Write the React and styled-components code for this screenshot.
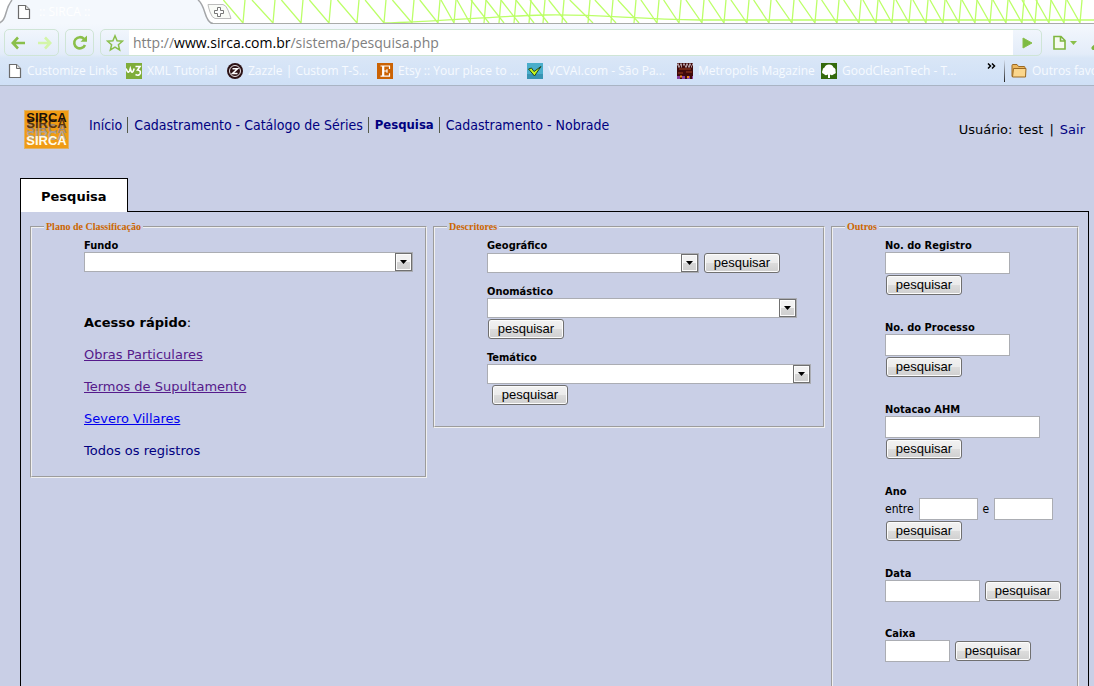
import React from "react";
import styled, { createGlobalStyle } from "styled-components";

const GlobalStyle = createGlobalStyle`
  * {
    box-sizing: border-box;
  }

  body {
    margin: 0;
    background-color: #c9cfe6;
    font-family: "DejaVu Sans", Verdana, sans-serif;
    font-size: 13px;
    line-height: 16px;
    color: #000;
  }

  button,
  input,
  select {
    margin: 0;
    font-family: inherit;
  }
`;

const bookmarks = [
  { name: "Customize Links", icon: "page", width: 118 },
  { name: "XML Tutorial", icon: "w3", width: 101 },
  { name: "Zazzle | Custom T-S...", icon: "zazzle", width: 150 },
  { name: "Etsy :: Your place to ...", icon: "etsy", width: 150 },
  { name: "VCVAI.com - São Pa...", icon: "check", width: 150 },
  { name: "Metropolis Magazine", icon: "metropolis", width: 144 },
  { name: "GoodCleanTech - T...", icon: "tree", width: 140 },
];

// x of every node where the mesh lines meet the bottom of the strip
const meshNodes = [
  243, 273, 301, 329, 357, 384, 412, 438, 454, 470, 484, 499, 514, 529, 543,
  562, 588, 611, 634, 657, 679, 702, 724, 747, 769, 792, 815, 837, 859, 876,
  892, 909, 926, 943, 959, 975, 990, 1006, 1022, 1035, 1049, 1064, 1080,
];

function Mesh() {
  return (
    <MeshSvg viewBox="0 0 1094 24" preserveAspectRatio="xMinYMin slice">
      <g fill="none" stroke="#bcff68" strokeWidth="1.300">
        {meshNodes.map((x, i) => {
          const step = i ? x - meshNodes[i - 1] : 28;
          // in the middle the diagonals cross above the bottom edge
          const over = x > 480 && x < 640 ? 5 : 0;
          return (
            <path
              key={x}
              d={`M${x - Math.max(13, step * 0.7)} 0L${x + over} 23M${x} 23L${x + 2} 0`}
            />
          );
        })}
        <path d="M383 23C440 22 490 16 545 15S630 19 700 20H1094" />
      </g>
    </MeshSvg>
  );
}

function PageIcon() {
  return (
    <svg width="14" height="16" viewBox="0 0 14 16">
      <path
        d="M1.500 1.500h7l4 4v9h-11z"
        fill="#fff"
        stroke="#6b6b6b"
        strokeWidth="1.200"
      />
      <path d="M8.500 1.500v4h4" fill="#ddd" stroke="#6b6b6b" />
    </svg>
  );
}

function BookmarkIcon({ name }) {
  switch (name) {
    case "w3":
      return (
        <svg width="16" height="16">
          <rect width="16" height="16" fill="#7fad3a" />
          <path
            d="M0 5.500l1.500 3q1 1.500 2-.5l.8-2.500.9 3q1 1.500 2-.3l1-2.700"
            fill="none"
            stroke="#fff"
            strokeWidth="1.600"
          />
          <path
            d="M9.500 3.500h4.500l-2.500 3.500q3.500.3 2.800 3.300-1.500 3-4.800 1.200"
            fill="none"
            stroke="#fff"
            strokeWidth="1.600"
          />
        </svg>
      );
    case "zazzle":
      return (
        <svg width="16" height="16">
          <circle cx="8" cy="8" r="8" fill="#2c1215" />
          <circle cx="8" cy="8" r="5.500" fill="none" stroke="#e8e2e4" />
          <path
            d="M5.500 5.800h5l-5 4.600h5"
            fill="none"
            stroke="#fff"
            strokeWidth="1.500"
          />
        </svg>
      );
    case "etsy":
      return (
        <svg width="16" height="16">
          <rect width="16" height="16" fill="#cb6304" />
          <path
            d="M3.500 3h9v3M3.500 13.200h9v-3M5.800 3v10M6 8h4M10 6.200v3.600"
            fill="none"
            stroke="#fff"
            strokeWidth="1.200"
          />
          <path d="M6.300 3v10" stroke="#fff" strokeWidth="2" />
        </svg>
      );
    case "check":
      return (
        <svg width="16" height="16">
          <rect width="16" height="16" fill="#4aaecb" />
          <rect y="11" width="16" height="5" fill="#3894b3" />
          <path
            d="M1.500 6l3-1 2.500 3.500 7-5-6.500 9.500z"
            fill="#c6f61c"
            stroke="#1f4426"
            strokeWidth="1"
          />
        </svg>
      );
    case "metropolis":
      return (
        <svg width="16" height="16">
          <rect width="16" height="16" fill="#400a0a" />
          <path
            d="M0 1.500h16M1 3.500h4M8 3.500h7"
            stroke="#b09aa0"
            strokeWidth="2"
            strokeDasharray="2 1"
          />
          <path d="M2 6h12M1 10h5M9 9h6" stroke="#6f2515" strokeWidth="2" />
          <path
            d="M0 14.500h16"
            stroke="#8a3fa0"
            strokeWidth="3"
            strokeDasharray="3 2"
          />
          <path d="M3 13.500h2M10 14h2" stroke="#f08a1c" strokeWidth="2" />
        </svg>
      );
    case "tree":
      return (
        <svg width="16" height="16">
          <rect width="16" height="16" fill="#346a0c" />
          <path
            d="M7 15v-3.500q-3 1.500-4-.5-3-1-1.500-3.500 0-2.500 2-3 1-3 4.500-3t4.500 3q2.500 1 2 3.500 1 2.500-1.500 3-1.500 2-4 .5V15z"
            fill="#fff"
          />
        </svg>
      );
    case "folder":
      return (
        <svg width="16" height="16">
          <path
            d="M1 13.500v-11q0-1 1-1h4l1.500 2H13q1 0 1 1v9z"
            fill="#ecb65c"
            stroke="#9d6a22"
          />
          <path
            d="M1.500 14l1-8.500H15l-.5 8.500z"
            fill="#fbd68c"
            stroke="#9d6a22"
          />
        </svg>
      );
    default:
      return <PageIcon />;
  }
}

function BrowserChrome() {
  return (
    <Chrome>
      <TabStrip>
        <Mesh />
        <TabShape width="236" height="24" viewBox="0 0 236 24">
          <path
            d="M0 23.500Q4 22 6 14T13 0H198Q202 4 205 14T213 24H0z"
            fill="#f4f8fd"
          />
          <path
            d="M0 22.500Q4 21 6 13T12 0M198 0Q202 3 205 13T213 23.500"
            fill="none"
            stroke="#a3a5a8"
            strokeWidth="1.500"
          />
          <path
            d="M208 4.500H223Q226 5 228 10T231 18.500H215Q212 18 210 12T208 4.500z"
            fill="#f9fbf7"
            stroke="#bcbcbc"
          />
          <path
            d="M217.500 7.500h3v3h3v3h-3v3h-3v-3h-3v-3h3z"
            fill="#fff"
            stroke="#777"
          />
        </TabShape>
        <TabTitle>
          <PageIcon />
          :: SIRCA ::
        </TabTitle>
      </TabStrip>

      <Toolbar>
        <NavButtons>
          <ToolButton aria-label="Voltar" $color="#8abf4a">
            <svg width="14" height="14">
              <path d="M14 7H2M7 1.500L1.800 7 7 12.500" />
            </svg>
          </ToolButton>
          <ToolButton aria-label="Avançar" $color="#d3f5a8">
            <svg width="14" height="14">
              <path d="M0 7h12M7 1.500L12.200 7 7 12.500" />
            </svg>
          </ToolButton>
        </NavButtons>
        <ReloadBox>
          <ToolButton aria-label="Recarregar" $color="#8abf4a">
            <svg width="16" height="16">
              <path d="M13 10A5.600 5.600 0 1 1 12 4" />
              <path d="M8.500 6.800h6.500V.5z" fill="#8abf4a" stroke="none" />
            </svg>
          </ToolButton>
        </ReloadBox>
        <AddressBar>
          <ToolButton aria-label="Favorito" $color="#8abf4a" $thin>
            <svg width="18" height="18" viewBox="0 0 18 18">
              <path d="M9 1.800l2.100 4.900 5.300.5-4 3.500 1.200 5.200L9 13.200l-4.600 2.700 1.200-5.200-4-3.500 5.300-.5z" />
            </svg>
          </ToolButton>
          <Url href="#pesquisa">
            http://<strong>www.sirca.com.br</strong>/sistema/pesquisa.php
          </Url>
          <ToolButton aria-label="Ir" $color="#8abf4a">
            <svg width="12" height="12">
              <path d="M2 1l9 5-9 5z" fill="#7dbb42" />
            </svg>
          </ToolButton>
        </AddressBar>
        <MenuButton aria-label="Página">
          <svg width="24" height="16">
            <path
              d="M1 1.500h7l4 4v8.500H1zM7.500 1.500V6h4.500"
              fill="#f6fbf0"
              stroke="#7fb63f"
              strokeWidth="1.600"
            />
            <path d="M17 6h7l-3.500 4z" fill="#8abf4a" />
          </svg>
        </MenuButton>
        <MenuButton aria-label="Ferramentas" $clipped>
          <svg width="16" height="16">
            <path
              d="M2.500 13L10 5.500"
              stroke="#7fb63f"
              strokeWidth="4"
              strokeLinecap="round"
            />
          </svg>
        </MenuButton>
      </Toolbar>

      <BookmarksBar>
        <BookmarkList>
          {bookmarks.map(({ name, icon, width }) => (
            <Bookmark key={name} href="#bookmark" $width={width}>
              <BookmarkIcon name={icon} />
              {name}
            </Bookmark>
          ))}
        </BookmarkList>
        <MoreButton aria-label="Mais favoritos">
          <svg width="9" height="7">
            <path
              d="M1 .5l2.500 2.500L1 5.500M5 .5l2.500 2.500L5 5.500"
              fill="none"
              stroke="#000"
              strokeWidth="1.500"
            />
          </svg>
        </MoreButton>
        <Divider />
        <Bookmark href="#bookmark" $width={83}>
          <BookmarkIcon name="folder" />
          Outros favoritos
        </Bookmark>
      </BookmarksBar>
    </Chrome>
  );
}

function SelectField({ id, label, width, children }) {
  return (
    <Field>
      <Label htmlFor={id}>{label}</Label>
      <FieldRow>
        <SelectBox $width={width}>
          <Select id={id}>
            <option></option>
          </Select>
          <Arrow>
            <svg width="7" height="4">
              <path d="M0 0h7L3.500 4z" />
            </svg>
          </Arrow>
        </SelectBox>
        {children}
      </FieldRow>
    </Field>
  );
}

function TextField({ id, label, width, inline }) {
  return (
    <Field>
      <Label htmlFor={id}>{label}</Label>
      <FieldRow>
        <Input id={id} type="text" $width={width} />
        {inline && <SearchButton />}
      </FieldRow>
      {!inline && <SearchButton />}
    </Field>
  );
}

function SearchButton({ indented }) {
  return (
    <Button type="button" $indented={indented}>
      pesquisar
    </Button>
  );
}

function App() {
  return (
    <Window>
      <GlobalStyle />
      <BrowserChrome />

      <Page>
        <Header>
          <Logo>
            <span>SIRCA</span>
            <span>SIRCA</span>
          </Logo>
          <Nav>
            <a href="#inicio">Início</a>
            <a href="#series">Cadastramento - Catálogo de Séries</a>
            <a href="#pesquisa" className="active">
              Pesquisa
            </a>
            <a href="#nobrade">Cadastramento - Nobrade</a>
          </Nav>
          <User>
            <span>Usuário:</span>
            <span>test</span>
            <span>|</span>
            <a href="#sair">Sair</a>
          </User>
        </Header>

        <Tab>Pesquisa</Tab>
        <Panel>
          <Fieldset $bottom={17}>
            <legend>Plano de Classificação</legend>
            <Fields>
              <SelectField id="fundo" label="Fundo" width={329} />
              <QuickAccess>
                <p>
                  <b>Acesso rápido</b>:
                </p>
                <QuickLink href="#obras" $color="#551a8b">
                  Obras Particulares
                </QuickLink>
                <QuickLink href="#termos" $color="#551a8b">
                  Termos de Supultamento
                </QuickLink>
                <QuickLink href="#severo" $color="#0000ee">
                  Severo Villares
                </QuickLink>
                <QuickLink href="#todos" $color="#000080" $plain>
                  Todos os registros
                </QuickLink>
              </QuickAccess>
            </Fields>
          </Fieldset>

          <Fieldset $bottom={20}>
            <legend>Descritores</legend>
            <Fields $gap={10}>
              <SelectField id="geografico" label="Geográfico" width={212}>
                <SearchButton />
              </SelectField>
              <Field>
                <SelectField id="onomastico" label="Onomástico" width={310} />
                <SearchButton />
              </Field>
              <Field>
                <SelectField id="tematico" label="Temático" width={324} />
                <SearchButton indented />
              </Field>
            </Fields>
          </Fieldset>

          <Fieldset $bottom={60}>
            <legend>Outros</legend>
            <Fields $gap={24}>
              <TextField id="registro" label="No. do Registro" width={125} />
              <TextField id="processo" label="No. do Processo" width={125} />
              <TextField id="notacao" label="Notacao AHM" width={155} />
              <Field>
                <Label htmlFor="ano-de">Ano</Label>
                <FieldRow $gap={5}>
                  entre
                  <Input id="ano-de" type="text" $width={59} />
                  <label htmlFor="ano-ate">e</label>
                  <Input id="ano-ate" type="text" $width={59} />
                </FieldRow>
                <SearchButton />
              </Field>
              <TextField id="data" label="Data" width={95} inline />
              <TextField id="caixa" label="Caixa" width={65} inline />
            </Fields>
          </Fieldset>
        </Panel>
      </Page>
    </Window>
  );
}

const Window = styled.div`
  display: flex;
  flex-direction: column;
  height: 100vh;
`;

const Chrome = styled.header`
  flex: none;
  overflow: hidden;
  border-bottom: 1px solid #a9b4c4;
  background: linear-gradient(#f4f8fd 24px, #e3ecf9 54px, #d9e6f7 58px, #cfe0f6);
  font-family: "Open Sans", "Noto Sans", sans-serif;
  font-size: 12px;
`;

const TabStrip = styled.div`
  position: relative;
  height: 24px;
  background-color: #fff;
  border-bottom: 1px solid #a9aba9;
`;

const MeshSvg = styled.svg`
  display: block;
  width: 100%;
  height: 23px;
`;

const TabShape = styled.svg`
  position: absolute;
  top: 0;
  left: 0;
`;

const TabTitle = styled.div`
  position: absolute;
  top: 4px;
  left: 17px;
  display: flex;
  align-items: center;
  gap: 8px;
  color: #fff;
`;

const Toolbar = styled.div`
  display: flex;
  align-items: center;
  padding: 5px 0 1px 4px;
`;

const NavButtons = styled.div`
  display: flex;
  width: 55px;
  height: 27px;
  margin-right: 6px;
  border: 1px solid #cfe5d6;
  border-radius: 5px;
`;

const ReloadBox = styled(NavButtons)`
  width: 29px;
`;

const ToolButton = styled.button`
  flex: 1;
  display: flex;
  align-items: center;
  justify-content: center;
  padding: 0;
  border: none;
  background: none;

  svg {
    fill: none;
    stroke: ${({ $color }) => $color};
    stroke-width: ${({ $thin }) => ($thin ? 1.5 : 2.6)};
  }
`;

const AddressBar = styled.div`
  flex: 1;
  display: flex;
  height: 27px;
  border: 1px solid #cfe5d6;
  border-radius: 5px;

  ${ToolButton} {
    flex: 0 0 28px;
  }

  ${ToolButton}:last-child svg {
    stroke-width: 1;
  }
`;

const Url = styled.a`
  flex: 1;
  padding-left: 4px;
  overflow: hidden;
  white-space: nowrap;
  background-color: #fff;
  color: #808080;
  font-size: 14px;
  line-height: 25px;
  text-decoration: none;

  strong {
    font-weight: normal;
    color: #000;
  }
`;

const MenuButton = styled.button`
  flex: none;
  width: ${({ $clipped }) => ($clipped ? 3 : 24)}px;
  height: 16px;
  margin-left: ${({ $clipped }) => ($clipped ? 14 : 11)}px;
  padding: 0;
  overflow: hidden;
  border: none;
  background: none;

  svg {
    display: block;
  }
`;

const BookmarksBar = styled.div`
  display: flex;
  align-items: center;
  height: 28px;
  padding-left: 8px;
`;

const BookmarkList = styled.nav`
  flex: 1;
  display: flex;
  overflow: hidden;
`;

const Bookmark = styled.a`
  flex: 0 0 ${({ $width }) => $width}px;
  display: flex;
  align-items: center;
  gap: 5px;
  overflow: hidden;
  white-space: nowrap;
  color: #f6faff;
  text-decoration: none;

  svg {
    flex: none;
  }
`;

const MoreButton = styled.button`
  align-self: flex-start;
  padding: 6px 8px;
  border: none;
  background: none;

  svg {
    display: block;
  }
`;

const Divider = styled.div`
  width: 1px;
  height: 22px;
  margin-right: 6px;
  background: linear-gradient(#d5e0f0, #222);
`;

const Page = styled.main`
  flex: 1;
  padding: 24px 5px 0 20px;
  overflow: auto;
  scrollbar-width: none;
`;

const Header = styled.div`
  display: flex;
  align-items: flex-start;
  height: 68px;
  padding: 0 4px;

  a {
    color: #000080;
    text-decoration: none;
  }
`;

const Logo = styled.div`
  display: flex;
  flex-direction: column;
  justify-content: space-between;
  align-items: center;
  width: 45px;
  height: 39px;
  border: 1px solid #e0b266;
  background-color: #f09c14;
  font-family: "Liberation Sans", Arial, sans-serif;
  font-weight: bold;
  line-height: 14px;

  span:first-child {
    color: #1a1008;
    text-shadow:
      0 6px #5a3410,
      0 11px #a08a78;
  }

  span:last-child {
    color: #fffbe8;
    text-shadow: 0 -5px #b0a494;
  }
`;

const Nav = styled.nav`
  display: flex;
  margin: 7px 0 0 20px;
  font-family: "DejaVu Sans Condensed", Tahoma, sans-serif;
  font-size: 14px;

  a + a {
    margin-left: 5px;
    padding-left: 6px;
    border-left: 1px solid #555a4a;
  }

  .active {
    font-size: 13px;
    font-weight: bold;
  }
`;

const User = styled.div`
  display: flex;
  gap: 6px;
  margin: 12px 0 0 auto;
`;

const Tab = styled.h1`
  position: relative;
  width: max-content;
  margin: 0 0 -1px;
  padding: 10px 20px 7px;
  border: 1px solid #000;
  border-bottom: none;
  background-color: #fff;
  font-size: 13px;
  line-height: 16px;
`;

const Panel = styled.form`
  display: grid;
  grid-template-columns: 397fr 392fr 248fr;
  align-items: start;
  gap: 6px;
  padding: 9px;
  border: 1px solid #000;
`;

const Fieldset = styled.fieldset`
  min-width: 0;
  margin: 0;
  padding: 5px 12px ${({ $bottom }) => $bottom}px;
  border: 2px groove #f0f0f0;

  legend {
    padding: 0 2px;
    font-family: "Liberation Serif", "Times New Roman", serif;
    font-size: 10px;
    font-weight: bold;
    line-height: 12px;
    color: #cc6600;
  }
`;

const Fields = styled.div`
  display: flex;
  flex-direction: column;
  gap: ${({ $gap = 0 }) => $gap}px;
  padding-left: 40px;
`;

const Field = styled.div`
  display: flex;
  flex-direction: column;
  align-items: flex-start;
  font-family: "DejaVu Sans Condensed", Tahoma, "Noto Sans", sans-serif;
  font-size: 12px;
`;

const Label = styled.label`
  padding-top: 2px;
  font-size: 11px;
  font-weight: bold;
  line-height: 12px;
`;

const FieldRow = styled.div`
  display: flex;
  align-items: center;
  gap: ${({ $gap = 4 }) => $gap}px;
`;

const Input = styled.input`
  width: ${({ $width }) => $width}px;
  height: 22px;
  border: 1px solid #abadb3;
  background-color: #fff;
`;

const SelectBox = styled.div`
  display: grid;
  width: ${({ $width }) => $width}px;
  height: 20px;
`;

const Select = styled.select`
  grid-area: 1 / 1;
  width: 100%;
  appearance: none;
  border: 1px solid #abadb3;
  border-radius: 0;
  background-color: #fff;
`;

const Arrow = styled.span`
  grid-area: 1 / 1;
  justify-self: end;
  display: flex;
  align-items: center;
  justify-content: center;
  width: 17px;
  margin: 1px;
  border: 1px solid #707070;
  box-shadow: inset 0 0 0 1px #fcfcfc;
  background: linear-gradient(#f2f2f2 50%, #d6d6d6 50%, #cfcfcf);
  pointer-events: none;
`;

const Button = styled.button`
  width: 76px;
  height: 20px;
  margin: 1px 1px 1px ${({ $indented }) => ($indented ? 5 : 1)}px;
  padding: 0;
  border: 1px solid #707070;
  border-radius: 3px;
  box-shadow: inset 0 0 0 1px #fcfcfc;
  background: linear-gradient(#f2f2f2, #ebebeb 50%, #dddddd 50%, #cfcfcf);
  font-family: "Liberation Sans", Arial, sans-serif;
  font-size: 13px;
  line-height: 18px;
  color: #000;
`;

const QuickAccess = styled.div`
  display: flex;
  flex-direction: column;
  align-items: flex-start;
  gap: 16px;
  margin-top: 43px;

  p {
    margin: 0;
  }
`;

const QuickLink = styled.a`
  color: ${({ $color }) => $color};
  text-decoration: ${({ $plain }) => ($plain ? "none" : "underline")};
`;

export default App;
